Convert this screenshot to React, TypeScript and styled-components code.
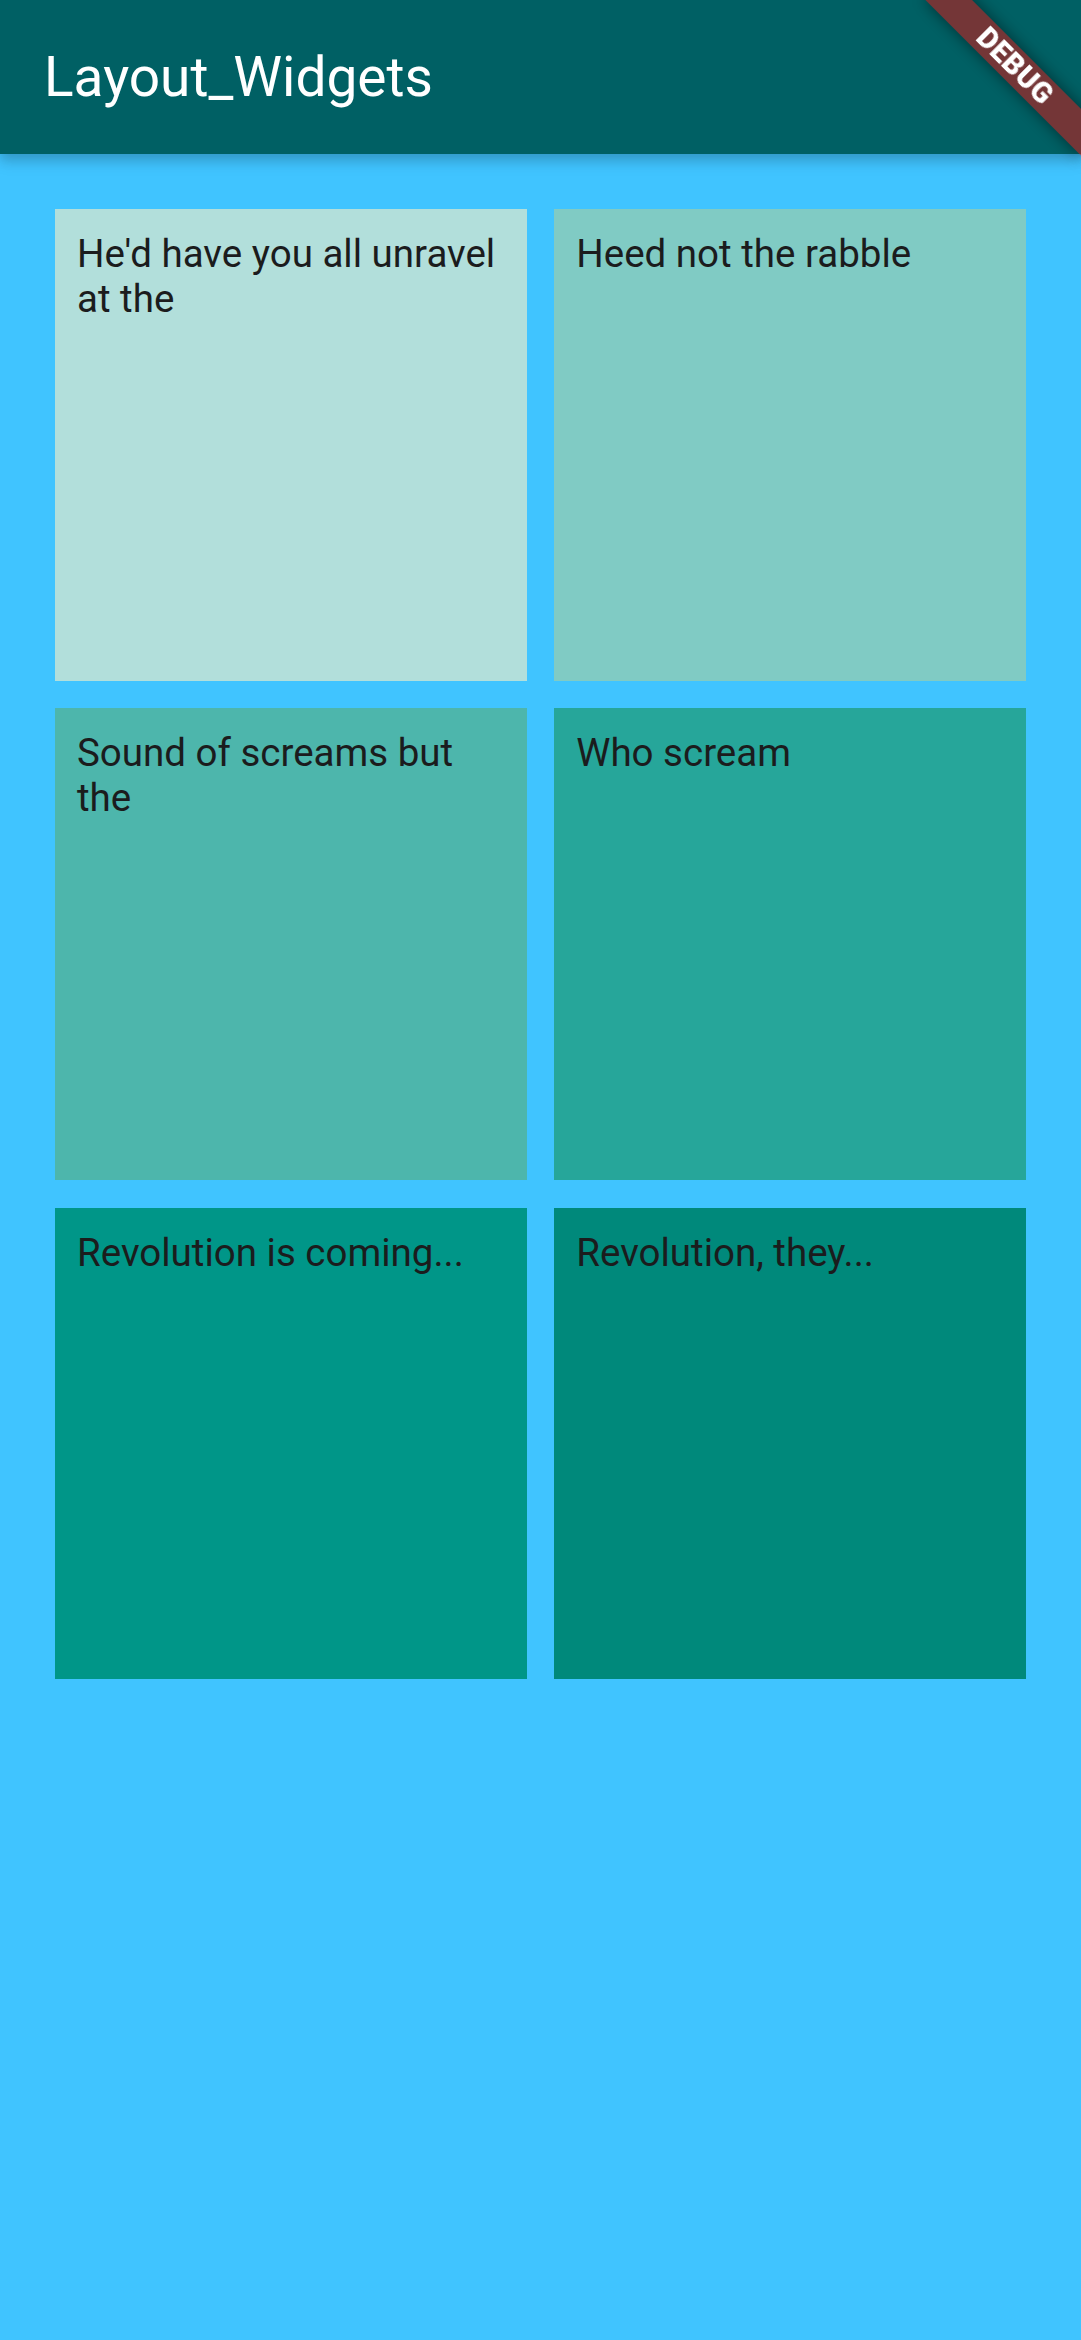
import React from "react";
import styled, { createGlobalStyle } from "styled-components";

const GlobalStyle = createGlobalStyle`
  html, body {
    margin: 0;
    padding: 0;
    overflow: hidden;
    background: #40c4ff;
  }
  body {
    font-family: Roboto, "Noto Sans", "Liberation Sans", sans-serif;
  }
  * { box-sizing: border-box; }
`;

const Screen = styled.div`
  position: relative;
  width: 1081px;
  min-height: 2340px;
  background: #40c4ff;
`;

const AppBar = styled.header`
  position: relative;
  z-index: 1;
  height: 154px;
  display: flex;
  align-items: center;
  padding-left: 44px;
  background: #006064;
  box-shadow: 0 5px 11px rgba(0, 0, 0, 0.16), 0 10px 14px rgba(0, 0, 0, 0.08);
`;

const Title = styled.h1`
  margin: 0;
  font-family: Roboto, "Noto Sans", sans-serif;
  font-weight: 400;
  font-size: 55px;
  line-height: 1;
  color: #ffffff;
`;

const Grid = styled.main`
  display: grid;
  grid-template-columns: 1fr 1fr;
  gap: 27.5px;
  padding: 55px;
`;

const Tile = styled.div<{ $bg: string }>`
  aspect-ratio: 1 / 1;
  background: ${(p) => p.$bg};
  padding: 22px;
`;

const TileText = styled.p`
  margin: 0;
  font-family: Roboto, "Noto Sans", sans-serif;
  font-size: 38.5px;
  line-height: 45px;
  font-weight: 400;
  color: #1b1c1d;
`;

const BannerAnchor = styled.div`
  position: fixed;
  top: 0;
  right: 0;
  width: 0;
  height: 0;
  z-index: 10;
`;

const Ribbon = styled.div`
  position: absolute;
  left: -110px;
  top: 77px;
  width: 220px;
  height: 33px;
  transform-origin: 110px -77px;
  transform: rotate(45deg);
  background: rgba(183, 28, 28, 0.63);
  box-shadow: 0 0 16px rgba(0, 0, 0, 0.5);
  display: flex;
  align-items: center;
  justify-content: center;
  color: #ffffff;
  font-family: Roboto, "Noto Sans", sans-serif;
  font-weight: 900;
  font-size: 29px;
  line-height: 1;
  letter-spacing: 0.5px;
`;

const tiles = [
  { text: "He'd have you all unravel at the", bg: "#b2dfdb" },
  { text: "Heed not the rabble", bg: "#80cbc4" },
  { text: "Sound of screams but the", bg: "#4db6ac" },
  { text: "Who scream", bg: "#26a69a" },
  { text: "Revolution is coming...", bg: "#009688" },
  { text: "Revolution, they...", bg: "#00897b" },
];

export default function App() {
  return (
    <>
      <GlobalStyle />
      <Screen>
        <AppBar>
          <Title>Layout_Widgets</Title>
        </AppBar>
        <Grid>
          {tiles.map((t) => (
            <Tile key={t.text} $bg={t.bg}>
              <TileText>{t.text}</TileText>
            </Tile>
          ))}
        </Grid>
        <BannerAnchor>
          <Ribbon>DEBUG</Ribbon>
        </BannerAnchor>
      </Screen>
    </>
  );
}
